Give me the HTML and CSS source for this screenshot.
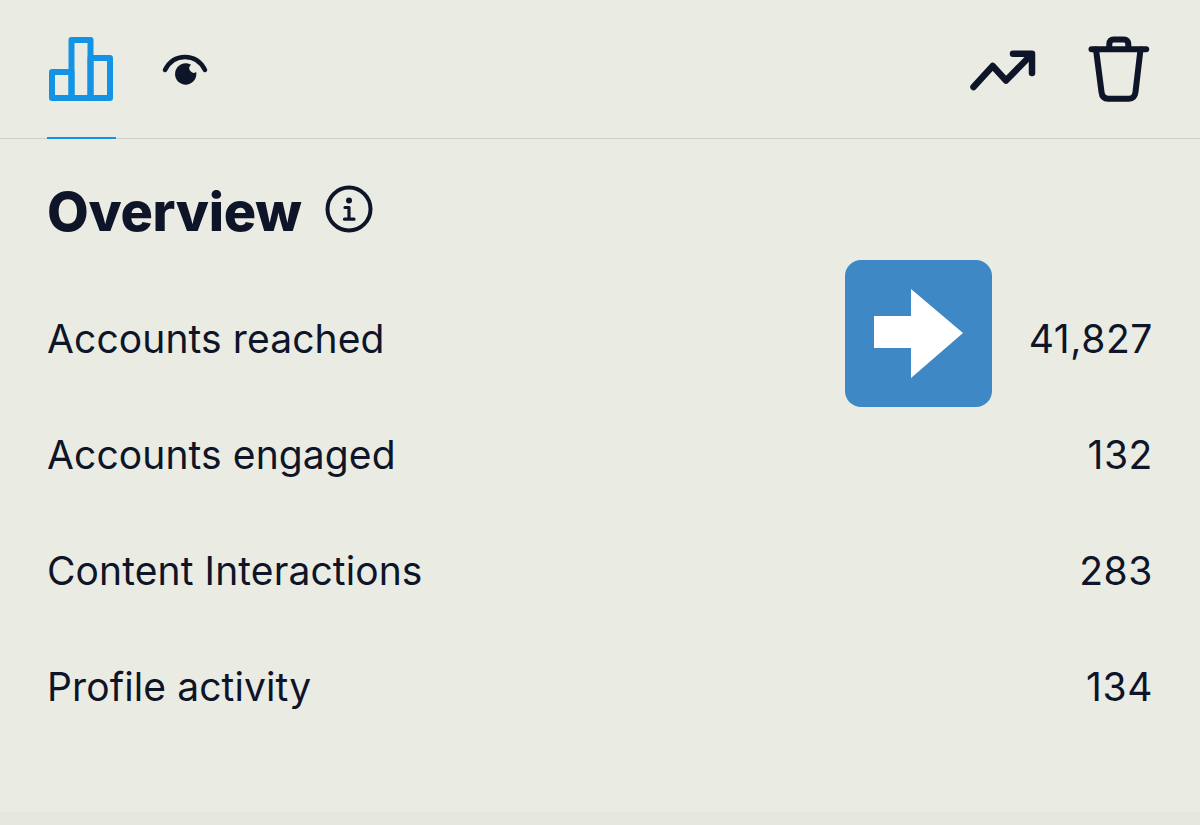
FILE: index.html
```html
<!DOCTYPE html>
<html lang="en">
<head>
  <meta charset="UTF-8" />
  <meta name="viewport" content="width=device-width, initial-scale=1.0" />
  <title>Post insights</title>
  <link rel="stylesheet" href="styles.css">
</head>
<body>
  <header class="toolbar">
    <div class="toolbar-group">
      <div class="tab tab-active">
        <svg class="icon-bars" width="69" height="69" viewBox="0 0 69 69" fill="none" stroke="#1393e6" stroke-width="6" stroke-linejoin="round">
          <path d="M5 38H24.5V64H5Z" />
          <path d="M24.5 6H43.5V64H24.5Z" />
          <path d="M43.5 24H63V64H43.5Z" />
        </svg>
      </div>
      <svg class="icon-eye" width="50" height="40" viewBox="0 0 50 40" fill="none">
        <path d="M5 20C10 10 17 7 25 7C33 7 40 10 45 20" stroke="#0e1528" stroke-width="4.5" stroke-linecap="round" />
        <path fill="#0e1528" d="M31.05 14.73A10.7 10.7 0 1 0 36.23 22.07A4.5 4.5 0 0 1 31.05 14.73Z" />
      </svg>
    </div>
    <div class="toolbar-group toolbar-actions">
      <svg width="70" height="44" viewBox="0 0 70 44" fill="none" stroke="#0e1528" stroke-width="6.5" stroke-linecap="round" stroke-linejoin="round">
        <path d="M5.5 40L24.7 19L38 33.5L63.5 7.5" />
        <path d="M45 6.7H64V26" />
      </svg>
      <svg width="66" height="70" viewBox="0 0 66 70" fill="none" stroke="#0e1528" stroke-width="6" stroke-linecap="round" stroke-linejoin="round">
        <path d="M5.5 15.3H60.2" />
        <path d="M10 15.5L15.5 58C16 62.5 18.5 64.7 22 64.7H43C46.5 64.7 49 62.5 49.5 58L54.5 15.5" />
        <path d="M23.3 15V10C23.3 7 25 5.5 27.5 5.5H38C40.5 5.5 42.3 7 42.3 10V15" />
      </svg>
    </div>
  </header>

  <main class="overview">
    <div class="overview-title">
      <h1>Overview</h1>
      <svg class="icon-info" width="48" height="48" viewBox="0 0 48 48" fill="none" stroke="#0e1528" stroke-linecap="round" stroke-linejoin="round">
        <circle cx="24" cy="24" r="21.5" stroke-width="4" />
        <circle cx="24" cy="15.5" r="3" fill="#0e1528" stroke="none" />
        <path d="M20 22.5H24V34M19.5 34.2H29" stroke-width="3.2" />
      </svg>
    </div>

    <div class="stats">
      <div class="stat-row"><span>Accounts reached</span><span class="stat-value">41,827</span></div>
      <div class="stat-row"><span>Accounts engaged</span><span class="stat-value">132</span></div>
      <div class="stat-row"><span>Content Interactions</span><span class="stat-value">283</span></div>
      <div class="stat-row"><span>Profile activity</span><span class="stat-value">134</span></div>

      <!-- Emoji style arrow sitting on top of the first row -->
      <div class="arrow-badge">
        <svg width="89" height="89" viewBox="0 0 89 89"><path fill="#fff" d="M0 27H37V0L89 44L37 89V59H0Z" /></svg>
      </div>
    </div>
  </main>

  <div class="bottom-band"></div>
</body>
</html>
```

FILE: styles.css
```css
* {
  box-sizing: border-box;
}

body {
  font-family: Inter, "Liberation Sans", sans-serif;
  background: #eaebe3;
  color: #0e1528;
  margin: 0;
  height: 825px;
  display: flex;
  flex-direction: column;
  overflow: hidden;
}

svg {
  display: block;
  flex: none;
}

/* Toolbar */
.toolbar {
  height: 139px;
  flex: none;
  display: flex;
  justify-content: space-between;
  padding: 0 48px 0 47px;
  border-bottom: 1px solid #cfd0c9;
}

.toolbar-group {
  display: flex;
  align-items: center;
  gap: 44px;
}

.toolbar-actions {
  gap: 48px;
}

.tab {
  width: 69px;
  height: 139px;
  padding-top: 34px;
  border-bottom: 2px solid #1393e6;
}

.icon-eye {
  margin-top: 1px;
}

/* Overview */
.overview {
  flex: 1;
  padding: 0 47px;
}

.overview-title {
  display: flex;
  align-items: center;
  gap: 23px;
  height: 146px;
  padding-bottom: 2px;
}

.overview-title h1 {
  font-size: 54px;
  font-weight: 800;
  letter-spacing: -0.3px;
  margin: 0;
}

.icon-info {
  margin-bottom: 4px;
}

.stats {
  position: relative;
  margin-top: -5px;
}

.stat-row {
  display: flex;
  justify-content: space-between;
  align-items: center;
  height: 116px;
  font-size: 39px;
  letter-spacing: 0.1px;
}

.stat-value {
  letter-spacing: 0.6px;
}

.arrow-badge {
  position: absolute;
  top: -20px;
  left: 798px;
  width: 147px;
  height: 147px;
  background: #3d88c5;
  border-radius: 16px;
  display: flex;
  align-items: center;
  justify-content: center;
}

.bottom-band {
  height: 13px;
  flex: none;
  background: #e6e7df;
}
```
